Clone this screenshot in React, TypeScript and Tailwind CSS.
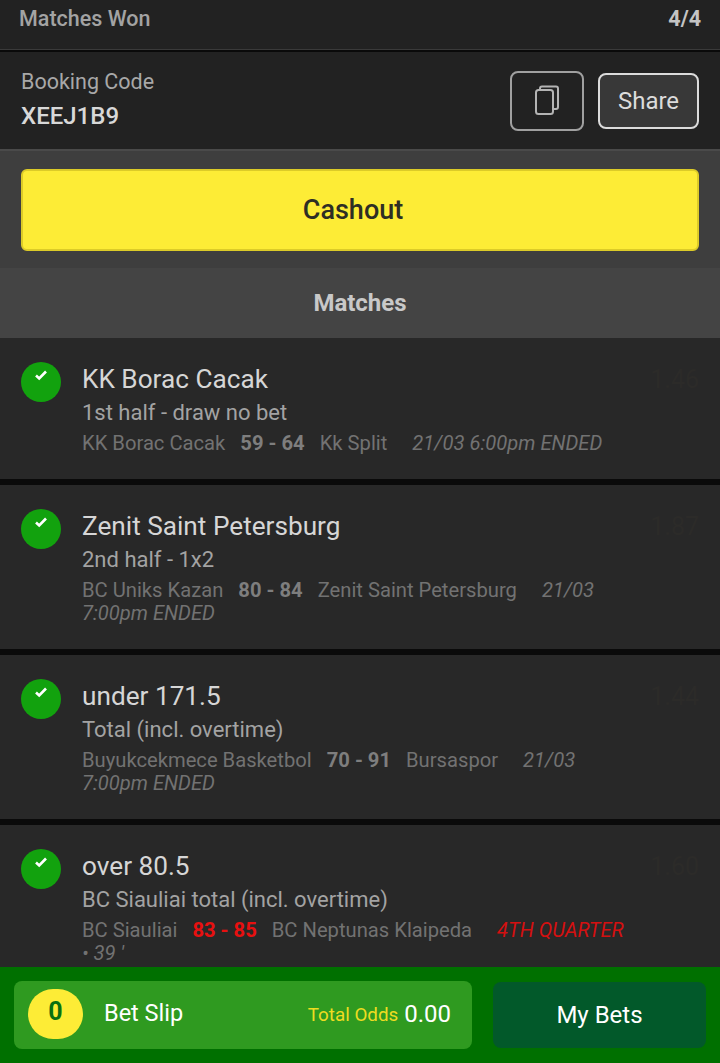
const matches = [
  {
    pick: "KK Borac Cacak",
    market: "1st half - draw no bet",
    home: "KK Borac Cacak",
    score: "59 - 64",
    away: "Kk Split",
    time: "21/03",
    rest: "6:00pm ENDED",
    odds: "1.46",
    live: false,
    height: "h-[141px]",
  },
  {
    pick: "Zenit Saint Petersburg",
    market: "2nd half - 1x2",
    home: "BC Uniks Kazan",
    score: "80 - 84",
    away: "Zenit Saint Petersburg",
    time: "21/03",
    rest: "7:00pm ENDED",
    odds: "1.87",
    live: false,
    height: "h-[164px]",
  },
  {
    pick: "under 171.5",
    market: "Total (incl. overtime)",
    home: "Buyukcekmece Basketbol",
    score: "70 - 91",
    away: "Bursaspor",
    time: "21/03",
    rest: "7:00pm ENDED",
    odds: "1.44",
    live: false,
    height: "h-[164px]",
  },
  {
    pick: "over 80.5",
    market: "BC Siauliai total (incl. overtime)",
    home: "BC Siauliai",
    score: "83 - 85",
    away: "BC Neptunas Klaipeda",
    time: "4TH QUARTER",
    rest: "• 39 '",
    odds: "1.60",
    live: true,
    height: "h-[164px]",
  },
];

function MatchRow({ m }: { m: (typeof matches)[number] }) {
  return (
    <div className={`flex bg-[#282828] pl-[21px] pr-[21px] pt-6 ${m.height}`}>
      <div className="w-10 h-10 rounded-full bg-[#12a20e] flex justify-center pt-[7px] shrink-0">
        <svg width="14" height="12" viewBox="0 0 14 12" fill="none">
          <path d="M2 6.5 L5.2 9.5 L12 2.5" stroke="white" strokeWidth="2.6" />
        </svg>
      </div>
      <div className="ml-[21px] w-[548px] pt-[2px]">
        <div className="text-[26.2px] leading-[30px] text-[#d6d6d6]">{m.pick}</div>
        <div className="text-[22px] leading-[26px] mt-[6px] text-[#a3a3a3]">{m.market}</div>
        <div className="text-[20.2px] leading-[23px] mt-[6px] text-[#727272]">
          {m.home}
          <span className={`font-bold mx-[15px] ${m.live ? "text-[#e81010]" : "text-[#7e7e7e]"}`}>{m.score}</span>
          {m.away}
          <span className={`italic ml-[25px] ${m.live ? "text-[#d41010]" : ""}`}>{m.time}</span>{" "}
          <span className="italic">{m.rest}</span>
        </div>
      </div>
      <div className="ml-auto pt-[3px] text-[25px] leading-[30px] text-[#2c2b29]">{m.odds}</div>
    </div>
  );
}

export default function App() {
  return (
    <main className="relative w-full h-[1063px] overflow-hidden bg-[#0a0a0a] font-['Roboto',sans-serif]">
      <div className="h-[50px] bg-[#222222] flex justify-between pl-[19px] pr-[19px] pt-[5px] text-[21.5px] leading-[28px] font-medium text-[#a3a3a3] border-b border-[#3a3a3a]">
        <span>Matches Won</span>
        <span className="text-[#c4c4c4] font-bold">4/4</span>
      </div>

      {/* booking code */}
      <div className="mt-[2px] h-[97px] bg-[#222222] flex items-center pl-[21px] pr-[21px]">
        <div className="-mt-[3px]">
          <div className="text-[21.5px] leading-[26px] text-[#a8a8a8]">Booking Code</div>
          <div className="text-[24px] leading-[28px] mt-[7px] font-medium text-[#d8d8d8]">XEEJ1B9</div>
        </div>
        <button className="ml-auto w-[74px] h-[60px] rounded-lg border-2 border-[#a0a0a0] flex items-center justify-center">
          <svg width="26" height="32" viewBox="0 0 26 32" fill="none" stroke="#b4b4b4" strokeWidth="2">
            <rect x="2" y="5" width="17" height="24" rx="2.5" />
            <path d="M6 4.8 V3.5 Q6 1.5 8 1.5 H22 Q24 1.5 24 3.5 V22 Q24 24 22 24 H19.5" />
          </svg>
        </button>
        <button className="ml-[14px] w-[101px] h-[56px] rounded-lg border-2 border-[#dcdcdc] bg-[#383838] text-[24px] text-[#dcdcdc]">
          Share
        </button>
      </div>

      {/* cashout */}
      <div className="h-[119px] bg-[#3e3e3e] border-t-2 border-[#4a4a4a] pt-[18px] px-[21px]">
        <button className="w-full h-[82px] pr-[14px] rounded-md bg-[#fdec36] border-2 border-[#dccb28] text-[27px] font-medium text-[#2e2e24]">
          Cashout
        </button>
      </div>

      <div className="h-[70px] bg-[#444444] flex items-center justify-center text-[24px] font-bold text-[#c8c8c8]">
        Matches
      </div>

      <div className="flex flex-col gap-[6px]">
        {matches.map((m) => (
          <MatchRow key={m.pick} m={m} />
        ))}
      </div>

      {/* bottom bar */}
      <div className="absolute left-0 right-0 bottom-0 h-[96px] bg-[#007000] flex pl-[14px] pr-[14px] pt-[14px]">
        <div className="w-[458px] h-[68px] rounded-lg bg-[#2f9a20] flex items-center pl-[14px] pr-[21px]">
          <div className="w-[55px] h-[50px] pb-[4px] -mt-[2px] rounded-full bg-[#fdec36] flex items-center justify-center text-[25px] font-bold text-[#0a7010]">
            0
          </div>
          <span className="ml-[21px] -mt-[3px] text-[23.5px] text-white">Bet Slip</span>
          <span className="ml-auto text-[18.8px] text-[#eedc20] mt-[1px]">Total Odds</span>
          <span className="ml-[6px] -mt-[2px] text-[24px] text-white">0.00</span>
        </div>
        <div className="ml-[21px] w-[213px] h-[66px] mt-[1px] rounded-lg bg-[#02592a] flex items-center justify-center text-[24px] text-white">
          My Bets
        </div>
      </div>
    </main>
  );
}
